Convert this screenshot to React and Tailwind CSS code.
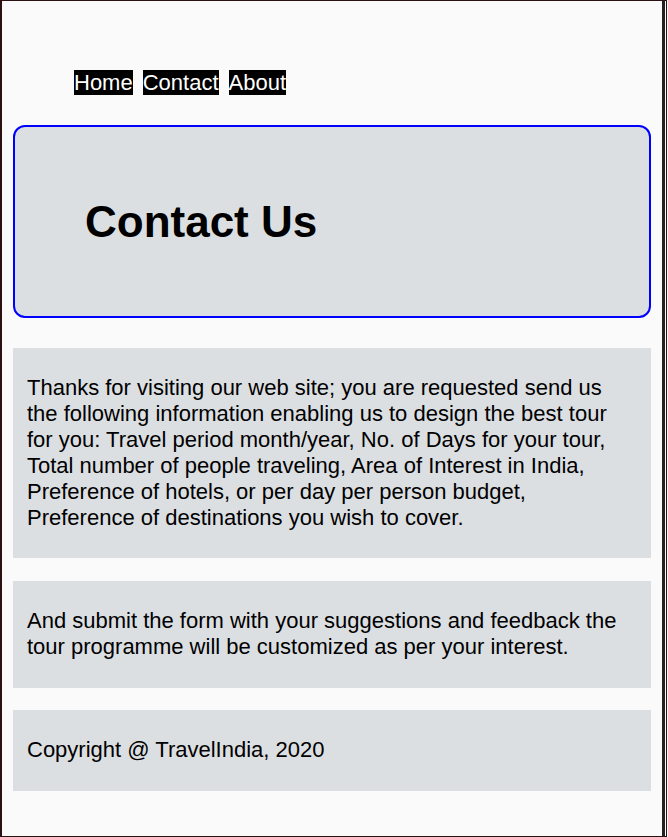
const FONT = { fontFamily: '"Liberation Sans", Arial, sans-serif' };

const NAV = ['Home', 'Contact', 'About'];

export default function App() {
  return (
    <div className="min-h-screen bg-[#fafafa]" style={FONT}>
      <div className="w-[667px] h-[837px] flex border-l-2 border-t border-b border-r border-[#2b1111] bg-[#fafafa] text-black">
        {/* main column */}
        <div className="flex-1 flex flex-col px-[11px] pt-[69px]">
          {/* nav */}
          <div className="flex gap-[10px] pl-[61px]">
            {NAV.map(n => (
              <span key={n} className="bg-black text-white text-[22px] h-[25px] leading-[25px]">
                {n}
              </span>
            ))}
          </div>

          {/* header */}
          <div className="mt-[30px] h-[193px] border-2 border-[#0000ff] rounded-[12px] bg-[#dcdfe2] pl-[70px] pt-[69px]">
            <h1 className="text-[44px] font-bold leading-[51px]">Contact Us</h1>
          </div>

          {/* info */}
          <div className="mt-[30px] bg-[#dcdfe2] px-[14px] pt-[27px] pb-[27px] text-[22px] leading-[26px]">
            Thanks for visiting our web site; you are requested send us the following information enabling us to design the best tour for you: Travel period month/year, No. of Days for your tour, Total number of people traveling, Area of Interest in India, Preference of hotels, or per day per person budget, Preference of destinations you wish to cover.
          </div>

          <div className="mt-[23px] bg-[#dcdfe2] px-[14px] pt-[27px] pb-[28px] text-[22px] leading-[26px]">
            And submit the form with your suggestions and feedback the tour programme will be customized as per your interest.
          </div>

          {/* footer */}
          <div className="mt-[22px] bg-[#dcdfe2] px-[14px] pt-[27px] pb-[28px] text-[22px] leading-[26px]">
            Copyright @ TravelIndia, 2020
          </div>
        </div>

        {/* right edge */}
        <div className="w-[3px] bg-[#222222]" />
        <div className="w-px" />
      </div>
    </div>
  );
}
